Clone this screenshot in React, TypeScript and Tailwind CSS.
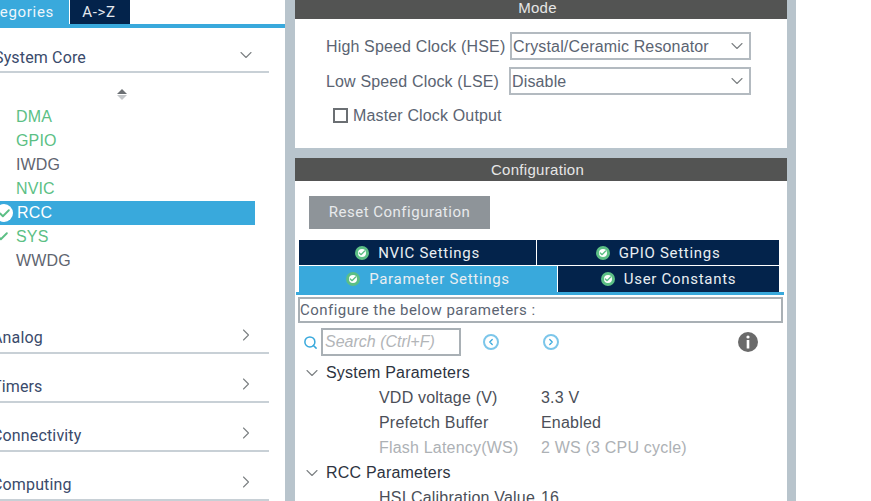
import React from 'react';
import { ChevronDown, ChevronRight, Search, ChevronLeft, Check } from 'lucide-react';

const CheckBadge = () => (
  <span className="flex h-[14px] w-[14px] items-center justify-center rounded-full border-[3px] border-[#5cbf85] bg-white">
    <Check size={8} strokeWidth={4} className="text-[#5cbf85]" />
  </span>
);

const Category = ({ name, pad }: { name: string; pad: string }) => (
  <div className={`flex h-[49px] items-end justify-between border-b-2 border-[#c8d0d6] ${pad}`}>
    <span className="ml-[-8px] pb-[4px] font-['Roboto',sans-serif] text-[16px] leading-[20px] text-[#3a4a6b]">{name}</span>
    <ChevronRight size={20} strokeWidth={1.3} className="mb-[7px] mr-[13px] text-[#7c8083]" />
  </div>
);

const PeripheralRow = ({ name, tone }: { name: string; tone: string }) => (
  <div className={`flex h-[24px] items-center pl-[16px] ${tone}`}>{name}</div>
);

const ClockSelect = ({ value, width }: { value: string; width: string }) => (
  <div className={`flex h-[28px] items-center justify-between border-2 border-[#b3bac0] pl-px pr-[2px] text-[#5b6472] ${width}`}>
    <span className="pt-px">{value}</span>
    <ChevronDown size={20} strokeWidth={1.3} className="text-[#7c8083]" />
  </div>
);

const SettingsTab = ({ label, className }: { label: string; className: string }) => (
  <div className={`flex items-center justify-center gap-[9px] font-['Roboto',sans-serif] text-[15px] tracking-[0.7px] text-[#e9eef2] ${className}`}>
    <CheckBadge />
    <span>{label}</span>
  </div>
);

const ParamRow = ({ label, value, muted }: { label: string; value: string; muted?: boolean }) => (
  <div className={`flex h-[25px] items-center pl-[84px] ${muted ? 'text-[#adb1b5]' : 'text-[#4b4f58]'}`}>
    <span className="w-[162px] shrink-0">{label}</span>
    <span>{value}</span>
  </div>
);

const ParamGroup = ({ label }: { label: string }) => (
  <div className="flex h-[25px] items-center pl-[7px] text-[#2d3340]">
    <ChevronDown size={20} strokeWidth={1.3} className="mr-[4px] w-[20px] text-[#7c8083]" />
    <span>{label}</span>
  </div>
);

export default function App() {
  return (
    <div className="flex h-[501px] w-[871px] overflow-hidden bg-white font-['Liberation_Sans',sans-serif] text-[16px] tracking-[0.15px]">
      {/* categories panel */}
      <div className="w-[285px] shrink-0 overflow-hidden">
        <div className="flex h-[24px] items-stretch font-['Roboto',sans-serif] text-[15px] tracking-[0.7px]">
          <div className="flex w-[69px] items-center justify-end bg-[#39a9dc] pr-[15px] text-[#eef6fb]">tegories</div>
          <div className="ml-px flex w-[60px] items-center justify-center bg-[#03234b] pr-[2px] text-[#e4e8ee]">A-&gt;Z</div>
        </div>
        <div className="h-[4px] bg-[#39a9dc]" />
        <div className="w-[269px]">
          <div className="flex h-[45px] items-end justify-between border-b-2 border-[#c8d0d6]">
            <span className="ml-[-6px] pb-[3px] font-['Roboto',sans-serif] leading-[20px] text-[#3a4a6b]">System Core</span>
            <ChevronDown size={20} strokeWidth={1.3} className="mb-[6px] mr-[13px] text-[#7c8083]" />
          </div>
          <div className="flex h-[32px] flex-col items-center justify-center gap-[1px] pr-[26px] pt-[10px]">
            <span className="h-0 w-0 border-x-[5px] border-b-[5px] border-x-transparent border-b-[#6c7074]" />
            <span className="h-0 w-0 border-x-[5px] border-t-[5px] border-x-transparent border-t-[#c3c6c9]" />
          </div>
          <div className="w-[255px]">
            <PeripheralRow name="DMA" tone="text-[#5cbf85]" />
            <PeripheralRow name="GPIO" tone="text-[#5cbf85]" />
            <PeripheralRow name="IWDG" tone="text-[#5f6570]" />
            <PeripheralRow name="NVIC" tone="text-[#5cbf85]" />
            <div className="relative flex h-[24px] items-center bg-[#39a9dc] pl-[17px] text-white">
              RCC
              <span className="absolute left-[-5px] top-[3px] flex h-[18px] w-[18px] items-center justify-center rounded-full bg-white">
                <Check size={13} strokeWidth={3.5} className="text-[#5cbf85]" />
              </span>
            </div>
            <div className="relative">
              <Check size={13} strokeWidth={3.5} className="absolute left-[-4px] top-[5px] text-[#5cbf85]" />
              <PeripheralRow name="SYS" tone="text-[#5cbf85]" />
            </div>
            <PeripheralRow name="WWDG" tone="text-[#5f6570]" />
          </div>
          <Category name="Analog" pad="mt-[32px]" />
          <Category name="Timers" pad="" />
          <Category name="Connectivity" pad="" />
          <Category name="Computing" pad="" />
        </div>
      </div>

      {/* middle panel */}
      <div className="w-[10px] shrink-0 bg-[#b8c4cc]" />
      <div className="w-[492px] shrink-0">
        <div className="flex h-[19px] items-center justify-center bg-[#535453] pb-[3px] pr-[7px] text-[15px] tracking-[0.3px] text-[#e6e6e6]">Mode</div>
        <div className="h-[129px] pl-[31px] pt-[13px] text-[#5b6472]">
          <div className="flex h-[28px] items-center">
            <span className="w-[184px] shrink-0 pt-px">High Speed Clock (HSE)</span>
            <ClockSelect value="Crystal/Ceramic Resonator" width="w-[241px]" />
          </div>
          <div className="mt-[7px] flex h-[28px] items-center">
            <span className="w-[183px] shrink-0 pt-px">Low Speed Clock (LSE)</span>
            <ClockSelect value="Disable" width="w-[242px]" />
          </div>
          <div className="mt-[7px] flex h-[26px] items-center pl-[7px]">
            <span className="mr-[5px] h-[15px] w-[15px] border-2 border-[#6b6f73]" />
            <span className="pt-px">Master Clock Output</span>
          </div>
        </div>
        <div className="h-[10px] bg-[#b8c4cc]" />
        <div className="flex h-[23px] items-center justify-center bg-[#535453] pr-[7px] pt-px text-[15px] tracking-[0.3px] text-[#e6e6e6]">Configuration</div>
        <div className="pl-[14px] pt-[15px]">
          <div className="flex h-[33px] w-[181px] items-center justify-center bg-[#8e9499] font-['Roboto',sans-serif] text-[15px] tracking-[0.5px] text-[#e8eaec]">Reset Configuration</div>
        </div>
        <div className="ml-[4px] mt-[11px] w-[480px]">
          <div className="flex h-[25px] gap-px">
            <SettingsTab label="NVIC Settings" className="w-[237px] bg-[#03234b] pt-px" />
            <SettingsTab label="GPIO Settings" className="flex-1 bg-[#03234b] pt-px" />
          </div>
          <div className="mt-px flex h-[26px] gap-px">
            <SettingsTab label="Parameter Settings" className="w-[258px] bg-[#39a9dc]" />
            <SettingsTab label="User Constants" className="flex-1 bg-[#03234b]" />
          </div>
        </div>
        <div className="ml-px h-[3px] w-[488px] bg-[#39a9dc]" />
        <div className="ml-[3px] mt-[2px] flex h-[26px] w-[485px] items-center border-2 border-[#a9b0b5] font-['Roboto',sans-serif] text-[15px] tracking-[0.46px] text-[#5b6472]">
          Configure the below parameters :
        </div>
        <div className="ml-[8px] mt-[5px] flex h-[28px] items-center">
          <Search size={15} strokeWidth={2.4} className="text-[#39a9dc]" />
          <div className="ml-[3px] flex h-[28px] w-[140px] items-center border-2 border-[#a9b0b5] pl-[2px] italic tracking-normal text-[#b2b5b8]">Search (Ctrl+F)</div>
          <span className="ml-[22px] flex h-[16px] w-[16px] items-center justify-center rounded-full border-2 border-[#7cc6ea]">
            <ChevronLeft size={10} strokeWidth={3} className="text-[#39a9dc]" />
          </span>
          <span className="ml-[44px] flex h-[16px] w-[16px] items-center justify-center rounded-full border-2 border-[#7cc6ea]">
            <ChevronRight size={10} strokeWidth={3} className="text-[#39a9dc]" />
          </span>
          <svg width="20" height="20" viewBox="0 0 20 20" className="ml-[179px]">
            <circle cx="10" cy="10" r="10" fill="#6a6a6a" />
            <circle cx="10" cy="5" r="1.6" fill="#fff" />
            <rect x="8.7" y="8" width="2.6" height="8.5" fill="#fff" />
          </svg>
        </div>
        <div className="mt-[4px] tracking-[0.2px]">
          <ParamGroup label="System Parameters" />
          <ParamRow label="VDD voltage (V)" value="3.3 V" />
          <ParamRow label="Prefetch Buffer" value="Enabled" />
          <ParamRow label="Flash Latency(WS)" value="2 WS (3 CPU cycle)" muted />
          <ParamGroup label="RCC Parameters" />
          <ParamRow label="HSI Calibration Value" value="16" />
        </div>
      </div>
      <div className="w-[9px] shrink-0 bg-[#b8c4cc]" />
    </div>
  );
}
